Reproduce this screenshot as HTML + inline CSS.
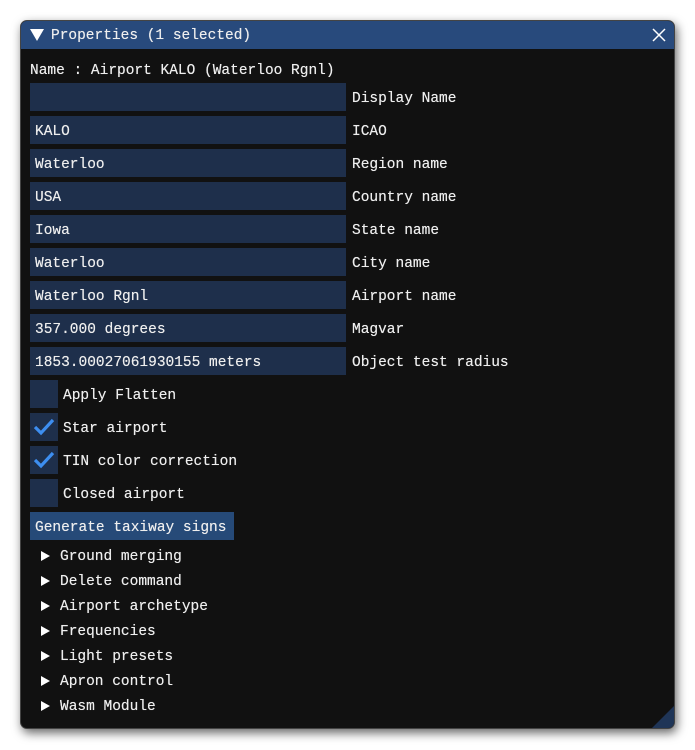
<!DOCTYPE html>
<html><head><style>
body{margin:0;width:695px;height:750px;background:#fff;position:relative;overflow:hidden;font-family:"Liberation Mono",monospace;font-size:14.5px;color:#eee}
.win{position:absolute;left:20px;top:20px;width:655px;height:709px;background:#111;border-radius:7px;box-shadow:2px 4px 10px rgba(0,0,0,.6);overflow:hidden;border:1px solid #444;box-sizing:border-box}
.title{position:absolute;left:0;top:0;right:0;height:28px;background:#284a7c;}
.t{position:absolute;white-space:pre;line-height:18px;margin-top:2px;text-shadow:0 0 0.4px #eee}
.f{position:absolute;left:9px;width:316px;height:28px;background:#1e2f4b}
.f span{position:absolute;left:5px;top:7px;white-space:pre;line-height:18px;text-shadow:0 0 0.4px #eee}
.cb{position:absolute;left:9px;width:28px;height:28px;background:#1e2f4b}
.btn{position:absolute;left:9px;top:491px;width:204px;height:28px;background:#264a78}
.arr{position:absolute;left:20px;width:0;height:0;border-top:5px solid transparent;border-bottom:5px solid transparent;border-left:9px solid #fff;margin-top:1px}
</style></head><body>
<div class="win">
<div class="title">
<div style="position:absolute;left:9px;top:8px;width:0;height:0;border-left:7px solid transparent;border-right:7px solid transparent;border-top:12px solid #fff"></div>
<div class="t" style="left:30px;top:4px">Properties (1 selected)</div>
<svg style="position:absolute;left:631px;top:7px" width="14" height="14"><path d="M1 1L13 13M13 1L1 13" stroke="#fff" stroke-width="1.5"/></svg>
</div>
<div class="t" style="left:9px;top:39px">Name : Airport KALO (Waterloo Rgnl)</div>

<div class="f" style="top:62px"></div><div class="t" style="left:331px;top:67px">Display Name</div>
<div class="f" style="top:95px"><span>KALO</span></div><div class="t" style="left:331px;top:100px">ICAO</div>
<div class="f" style="top:128px"><span>Waterloo</span></div><div class="t" style="left:331px;top:133px">Region name</div>
<div class="f" style="top:161px"><span>USA</span></div><div class="t" style="left:331px;top:166px">Country name</div>
<div class="f" style="top:194px"><span>Iowa</span></div><div class="t" style="left:331px;top:199px">State name</div>
<div class="f" style="top:227px"><span>Waterloo</span></div><div class="t" style="left:331px;top:232px">City name</div>
<div class="f" style="top:260px"><span>Waterloo Rgnl</span></div><div class="t" style="left:331px;top:265px">Airport name</div>
<div class="f" style="top:293px"><span>357.000 degrees</span></div><div class="t" style="left:331px;top:298px">Magvar</div>
<div class="f" style="top:326px"><span>1853.00027061930155 meters</span></div><div class="t" style="left:331px;top:331px">Object test radius</div>

<div class="cb" style="top:359px"></div><div class="t" style="left:42px;top:364px">Apply Flatten</div>
<div class="cb" style="top:392px"><svg width="28" height="28"><path d="M5 14L11 20L23 7" stroke="#3d8ef0" stroke-width="3.2" fill="none"/></svg></div><div class="t" style="left:42px;top:397px">Star airport</div>
<div class="cb" style="top:425px"><svg width="28" height="28"><path d="M5 14L11 20L23 7" stroke="#3d8ef0" stroke-width="3.2" fill="none"/></svg></div><div class="t" style="left:42px;top:430px">TIN color correction</div>
<div class="cb" style="top:458px"></div><div class="t" style="left:42px;top:463px">Closed airport</div>

<div class="btn"></div><div class="t" style="left:14px;top:496px">Generate taxiway signs</div>

<div class="arr" style="top:529px"></div><div class="t" style="left:39px;top:525px">Ground merging</div>
<div class="arr" style="top:554px"></div><div class="t" style="left:39px;top:550px">Delete command</div>
<div class="arr" style="top:579px"></div><div class="t" style="left:39px;top:575px">Airport archetype</div>
<div class="arr" style="top:604px"></div><div class="t" style="left:39px;top:600px">Frequencies</div>
<div class="arr" style="top:629px"></div><div class="t" style="left:39px;top:625px">Light presets</div>
<div class="arr" style="top:654px"></div><div class="t" style="left:39px;top:650px">Apron control</div>
<div class="arr" style="top:679px"></div><div class="t" style="left:39px;top:675px">Wasm Module</div>

<svg style="position:absolute;right:0;bottom:0" width="22" height="22"><path d="M22 0L22 22L0 22Z" fill="#1f3557"/></svg>
</div>
</body></html>
